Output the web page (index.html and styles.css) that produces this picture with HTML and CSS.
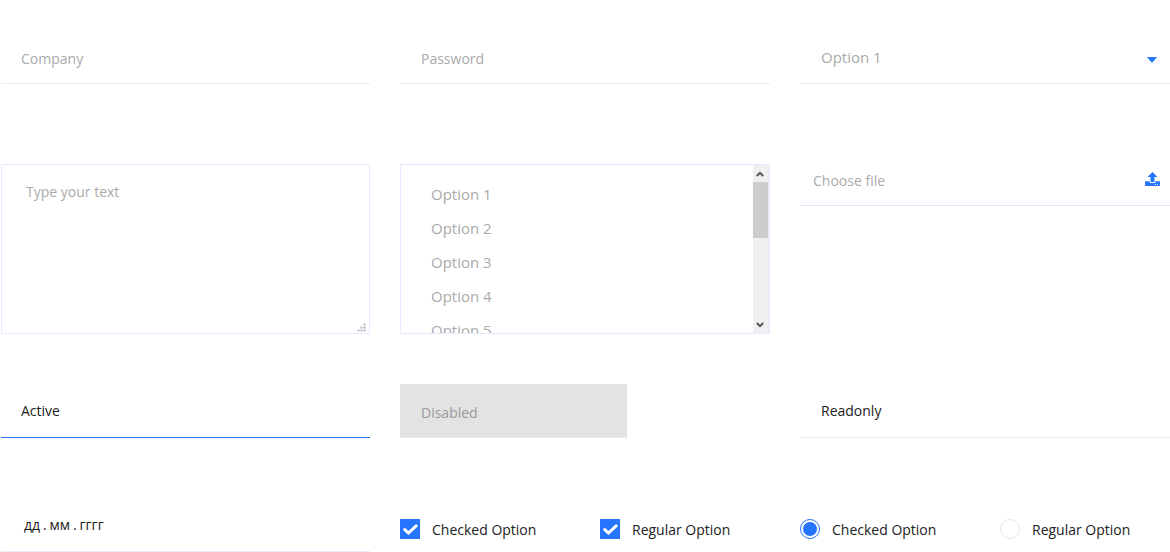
FILE: index.html
```html
<!DOCTYPE html>
<html lang="en">
<head>
<meta charset="utf-8">
<title>Form elements</title>
<link rel="stylesheet" href="styles.css">
</head>
<body>
<main class="form">
  <div class="field inset">Company</div>
  <div class="field">Password</div>
  <div class="field select"><span>Option 1</span><svg class="caret" viewBox="0 0 10 6"><path d="M0 0h10L5 6z"/></svg></div>

  <div class="textarea inset"><span>Type your text</span>
    <svg class="grip" viewBox="0 0 9 9"><path d="M6.5.5h2v2h-2zM3.5 3.5h2v2h-2zM6.5 3.5h2v2h-2zM.5 6.5h2v2h-2zM3.5 6.5h2v2h-2zM6.5 6.5h2v2h-2z"/></svg>
  </div>
  <div class="listbox">
    <ul class="options"><li>Option 1</li><li>Option 2</li><li>Option 3</li><li>Option 4</li><li>Option 5</li></ul>
    <div class="scrollbar">
      <svg class="arrow" viewBox="0 0 8 6"><path d="M.8 5L4 1.8 7.2 5"/></svg>
      <div class="thumb"></div>
      <svg class="arrow" viewBox="0 0 8 6"><path d="M.8 1L4 4.2 7.2 1"/></svg>
    </div>
  </div>
  <div class="file"><span>Choose file</span>
    <svg class="upload" viewBox="0 0 15 14"><path d="M7.5 0L12.5 5H9.5v5H5.5V5H2.5zM.5 9.2h4.2V11h5.6V9.2h4.2l.5.5v3.8l-.5.5H.5L0 13.5V9.7zM9.7 12v1h1v-1zM12 12v1h1v-1z" fill-rule="evenodd"/></svg>
  </div>

  <div class="field inset active">Active</div>
  <div class="field disabled">Disabled</div>
  <div class="field readonly">Readonly</div>

  <div class="field inset date">дд . мм . гггг</div>
  <div class="choices">
    <div class="choice"><span class="box"><svg class="check" viewBox="0 0 15 11"><path d="M1.8 5.6L5.4 9 13.2 1.8"/></svg></span>Checked Option</div>
    <div class="choice"><span class="box"><svg class="check" viewBox="0 0 15 11"><path d="M1.8 5.6L5.4 9 13.2 1.8"/></svg></span>Regular Option</div>
  </div>
  <div class="choices">
    <div class="choice"><span class="radio on"></span>Checked Option</div>
    <div class="choice"><span class="radio"></span>Regular Option</div>
  </div>
</main>
</body>
</html>
```
FILE: styles.css
```css
* { box-sizing: border-box; }
body {
  margin: 0;
  background: #fff;
  color: #212121;
  font: 14px/20px "Open Sans", sans-serif;
  overflow: hidden;
}
.form {
  display: grid;
  grid-template-columns: repeat(3, 370px);
  grid-template-rows: 84px 250px 104px 114px;
  column-gap: 30px;
  align-items: end;
  width: 1170px;
  height: 552px;
}
.field {
  height: 54px;
  padding: 19px 20px 0 21px;
  border-bottom: 1px solid #e8ebfa;
  color: #aaa;
}
.inset { margin-left: 1px; }
.field.inset { padding-left: 20px; }
.select {
  display: flex;
  justify-content: space-between;
  padding-top: 17px;
  padding-right: 13px;
  font-size: 15px;
}
.caret { width: 10px; height: 6px; margin-top: 10px; fill: #2575ff; }
.textarea {
  display: flex;
  justify-content: space-between;
  height: 170px;
  padding: 17px 3px 1px 24px;
  border: 1px solid #e8ebfd;
  color: #aaa;
}
.grip { align-self: flex-end; width: 9px; height: 9px; fill: #b8b8b8; }
.listbox {
  display: flex;
  justify-content: space-between;
  height: 170px;
  border: 1px solid #e4e9fd;
  overflow: hidden;
}
.options {
  margin: 0;
  padding: 12px 0 0 30px;
  list-style: none;
  color: #aaa;
  font-size: 15px;
  line-height: 34px;
}
.scrollbar {
  display: flex;
  flex-direction: column;
  align-items: center;
  width: 16.5px;
  height: 168px;
  padding: 6px 1.5px 5px 0;
  background: #f0f0f0;
}
.thumb { flex: none; width: 15px; height: 56px; margin: 5px 0 auto; background: #cdcdcd; }
.arrow { flex: none; width: 8px; height: 6px; fill: none; stroke: #555; stroke-width: 2; }
.file {
  display: flex;
  align-self: start;
  justify-content: space-between;
  height: 42px;
  margin-top: 80px;
  padding: 7px 10px 0 13px;
  border-bottom: 1px solid #e3e9fb;
  color: #aaa;
}
.upload { width: 15px; height: 14px; margin-top: 1px; fill: #2575ff; }
.active { border-color: #2575e8; }
.active, .readonly, .date { padding-top: 17px; color: #212121; }
.field.date { padding-left: 23px; word-spacing: -.75px; }
.disabled { width: 227px; background: #e3e3e3; color: #999; }
.choices { display: flex; height: 33px; }
.choice { display: flex; flex: none; width: 200px; height: 20px; gap: 12px; line-height: 22px; white-space: nowrap; }
.choice:last-child { width: 170px; }
.box {
  display: flex;
  flex: none;
  align-items: center;
  justify-content: center;
  width: 20px;
  height: 20px;
  background: #2575ff;
}
.check { width: 15px; height: 11px; margin-top: 1px; fill: none; stroke: #fff; stroke-width: 3; stroke-linecap: round; }
.radio { flex: none; width: 20px; height: 20px; border: 1px solid #e6e6e6; border-radius: 50%; }
.on { padding: 2px; border-color: #2575ff; background: #2575ff content-box; }
```
